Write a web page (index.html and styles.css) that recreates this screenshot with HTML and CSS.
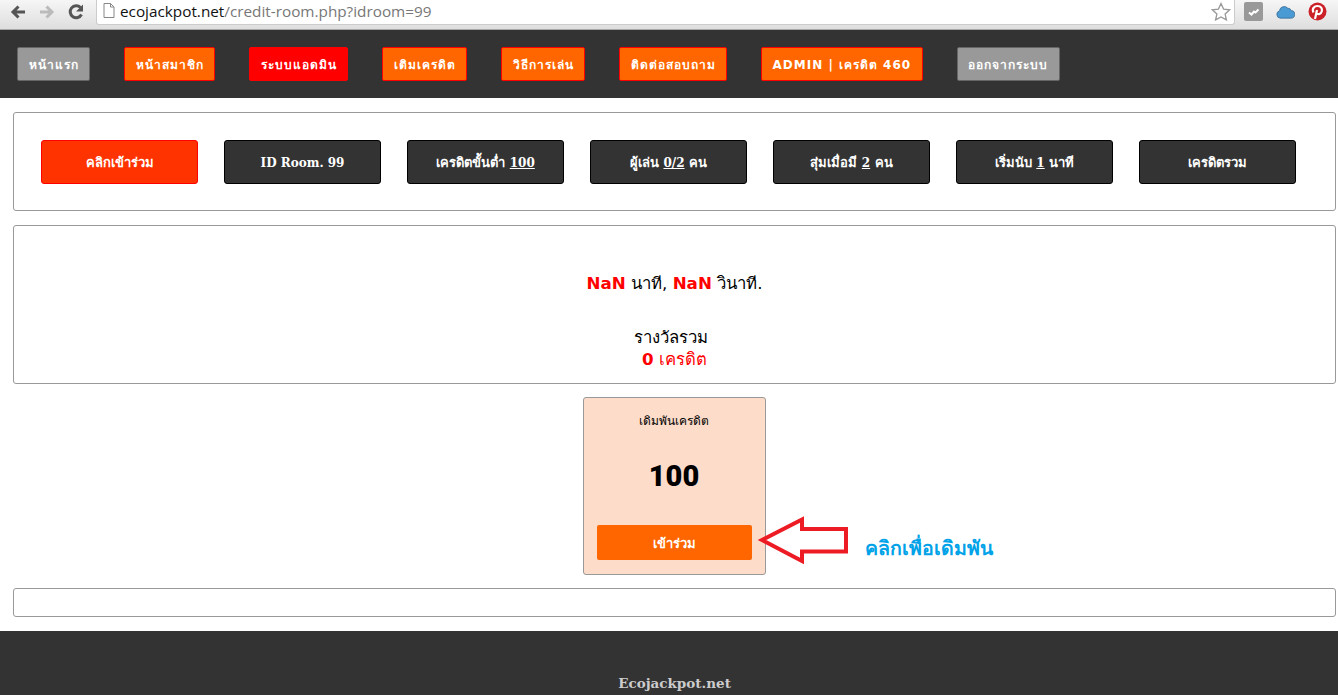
FILE: index.html
```html
<!DOCTYPE html>
<html lang="th">
<head>
<meta charset="utf-8">
<title>Ecojackpot</title>
<link rel="stylesheet" href="styles.css">
</head>
<body>
<div class="chrome">
  <svg class="tool" width="20" height="20" viewBox="0 0 20 20"><path d="M17 10H6M10.500 4.500L5 10l5.500 5.500" fill="none" stroke="#555" stroke-width="3"/></svg>
  <svg class="tool" width="20" height="20" viewBox="0 0 20 20"><path d="M3 10h11M9.500 4.500L15 10l-5.500 5.500" fill="none" stroke="#bbb" stroke-width="3"/></svg>
  <svg class="tool" width="20" height="20" viewBox="0 0 20 20"><path d="M15.500 12.500A6 6 0 1 1 14.500 5.500" fill="none" stroke="#555" stroke-width="3"/><path d="M17 2.500v7h-7z" fill="#555"/></svg>
  <div class="omnibox">
    <svg class="page-icon" width="12" height="15" viewBox="0 0 12 15"><path d="M1 .5h6.500L11 4v10.500H1zM7.500 .5V4H11" fill="#fff" stroke="#888"/></svg>
    <span class="host">ecojackpot.net</span><span class="path">/credit-room.php?idroom=99</span>
    <svg class="star" width="20" height="19" viewBox="0 0 20 19"><path d="M10 1.500l2.600 5.600 6 .7-4.500 4.100 1.300 6L10 14.900 4.600 17.900l1.300-6L1.400 7.800l6-.7z" fill="#fff" stroke="#999" stroke-width="1.300"/></svg>
  </div>
  <div class="extensions">
    <svg width="19" height="19" viewBox="0 0 19 19"><rect width="19" height="19" rx="2" fill="#999"/><path d="M5 10.500l2.500 2 2.500-3 1.500 1 3-3" fill="none" stroke="#fff" stroke-width="2"/></svg>
    <svg width="19" height="14" viewBox="0 0 20 14"><path d="M4.500 13.500a4 4 0 0 1-.8-7.800 5 5 0 0 1 8.800-2.700 3.500 3.500 0 0 1 3.500 2.500 4 4 0 0 1-.5 8z" fill="#4a9ad4" stroke="#2c5f88" stroke-width=".7"/></svg>
    <svg width="19" height="19" viewBox="0 0 19 19"><circle cx="9.500" cy="9.500" r="9" fill="#cb2027"/><path d="M7 17l2-9M5.500 10.500c-2-4 1-6.500 4-6.500 3.500 0 5 2.500 4.300 5.300-.7 2.800-3.800 4-5.300 1.700" fill="none" stroke="#fff" stroke-width="2.200"/></svg>
  </div>
</div>

<nav class="nav">
  <a class="nav-btn grey">หน้าแรก</a>
  <a class="nav-btn orange">หน้าสมาชิก</a>
  <a class="nav-btn red">ระบบแอดมิน</a>
  <a class="nav-btn orange">เติมเครดิต</a>
  <a class="nav-btn orange">วิธีการเล่น</a>
  <a class="nav-btn orange">ติดต่อสอบถาม</a>
  <a class="nav-btn orange">ADMIN | เครดิต 460</a>
  <a class="nav-btn grey">ออกจากระบบ</a>
</nav>

<main class="main">
  <section class="panel info">
    <a class="info-btn join">คลิกเข้าร่วม</a>
    <a class="info-btn"><span class="latin">ID Room. 99</span></a>
    <a class="info-btn">เครดิตขั้นต่ำ <u class="latin">100</u></a>
    <a class="info-btn">ผู้เล่น <u class="latin">0/2</u> คน</a>
    <a class="info-btn">สุ่มเมื่อมี <u class="latin">2</u> คน</a>
    <a class="info-btn">เริ่มนับ <u class="latin">1</u> นาที</a>
    <a class="info-btn">เครดิตรวม</a>
  </section>

  <section class="panel status">
    <p class="timer"><b>NaN</b> นาที, <b>NaN</b> วินาที.</p>
    <p class="prize">รางวัลรวม</p>
    <p class="prize-value"><b>0</b> เครดิต</p>
  </section>

  <section class="bet-row">
    <div class="card">
      <div class="card-title">เดิมพันเครดิต</div>
      <div class="card-amount">100</div>
      <a class="card-btn">เข้าร่วม</a>
      <svg class="arrow" width="92" height="48" viewBox="0 0 92 48"><path d="M5 24L45 3.500V13H89V35.500H45V45Z" fill="#fff" stroke="#ed1c24" stroke-width="4"/></svg>
      <span class="hint">คลิกเพื่อเดิมพัน</span>
    </div>
  </section>

  <section class="panel empty"></section>
</main>

<footer class="footer">Ecojackpot.net</footer>
</body>
</html>
```
FILE: styles.css
```css
* { box-sizing: border-box; }
html, body { margin: 0; padding: 0; height: 695px; overflow: hidden; }
body { background: #fff; font-family: "DejaVu Sans", "Noto Sans", sans-serif; color: #000; }
p { margin: 0; }

.chrome {
  height: 30px;
  display: flex;
  align-items: flex-start;
  padding-left: 8px;
  background: linear-gradient(#f6f6f6, #dedede);
  border-bottom: 1px solid #a8a8a8;
}
.tool { margin: 2px 9px 0 0; flex: none; }
.omnibox {
  width: 1139px;
  height: 25px;
  margin-left: 1px;
  display: flex;
  align-items: center;
  padding: 0 3px 3px 6px;
  background: #fff;
  border: 1px solid #ccc;
  border-top: 0;
  border-radius: 0 0 3px 3px;
  font: 15.300px "Open Sans", "Liberation Sans", sans-serif;
}
.page-icon { margin-right: 5px; }
.host { color: #111; }
.path { color: #777; flex: 1; }
.star { margin-top: 2px; }
.extensions { display: flex; align-items: center; gap: 13px; padding: 2px 0 0 9px; }

.nav {
  height: 68px;
  display: flex;
  align-items: center;
  gap: 34px;
  padding-left: 17px;
  background: #333;
}
.nav-btn {
  height: 34px;
  display: flex;
  align-items: center;
  padding: 0 10.500px;
  border: 1px solid;
  border-radius: 2px;
  color: #fff;
  font-size: 12px;
  font-weight: 700;
  letter-spacing: 1px;
  white-space: nowrap;
}
.grey { background: #999; border-color: #666; }
.orange { background: #f60; border-color: #f00; }
.red { background: #f00; border-color: #f00; }

.main { padding: 14px 2px 14px 13px; display: flex; flex-direction: column; gap: 14px; }
.panel { border: 1px solid #999; border-radius: 3px; background: #fff; }

.info { height: 99px; display: flex; align-items: center; gap: 26px; padding-left: 27px; }
.info-btn {
  width: 157px;
  height: 44px;
  flex: none;
  padding-top: 14px;
  line-height: 16px;
  text-align: center;
  background: #333;
  border: 1px solid #000;
  border-radius: 3px;
  color: #fff;
  font-size: 13px;
  font-weight: 700;
}
.join { background: #f30; border-color: #f00; }
.latin { font-family: "DejaVu Serif", serif; font-size: 12px; }

.status { height: 159px; padding-top: 44px; text-align: center; font-size: 16.700px; line-height: 26px; }
.timer b, .prize-value { color: #f00; }
.prize { margin-top: 29px; padding-right: 8px; line-height: 24px; }
.prize-value { line-height: 20px; }

.bet-row { height: 178px; margin: -1px 0; display: flex; justify-content: center; }
.card {
  position: relative;
  width: 183px;
  height: 178px;
  margin-right: 1px;
  padding: 14px 13px 0;
  background: #fddcca;
  border: 1px solid #999;
  border-radius: 3px;
  text-align: center;
}
.card-title { font-size: 12px; line-height: 18px; }
.card-amount { margin-top: 27px; font-size: 29px; line-height: 38px; font-weight: 900; font-family: Roboto, "DejaVu Sans", sans-serif; }
.card-btn {
  display: flex;
  align-items: center;
  justify-content: center;
  height: 35px;
  margin-top: 30px;
  padding-top: 2px;
  background: #f60;
  border-radius: 2px;
  color: #fff;
  font-size: 13px;
  font-weight: 700;
}
.arrow { position: absolute; left: 173px; top: 118px; }
.hint {
  position: absolute;
  left: 281px;
  top: 135px;
  color: #00a2e8;
  font-size: 19.500px;
  font-weight: 700;
  white-space: nowrap;
}

.empty { height: 29px; }

.footer {
  height: 64px;
  padding: 44px 0 0 11px;
  background: #333;
  color: #ccc;
  text-align: center;
  font-family: "DejaVu Serif", serif;
  font-size: 13.500px;
  font-weight: 700;
}
```
